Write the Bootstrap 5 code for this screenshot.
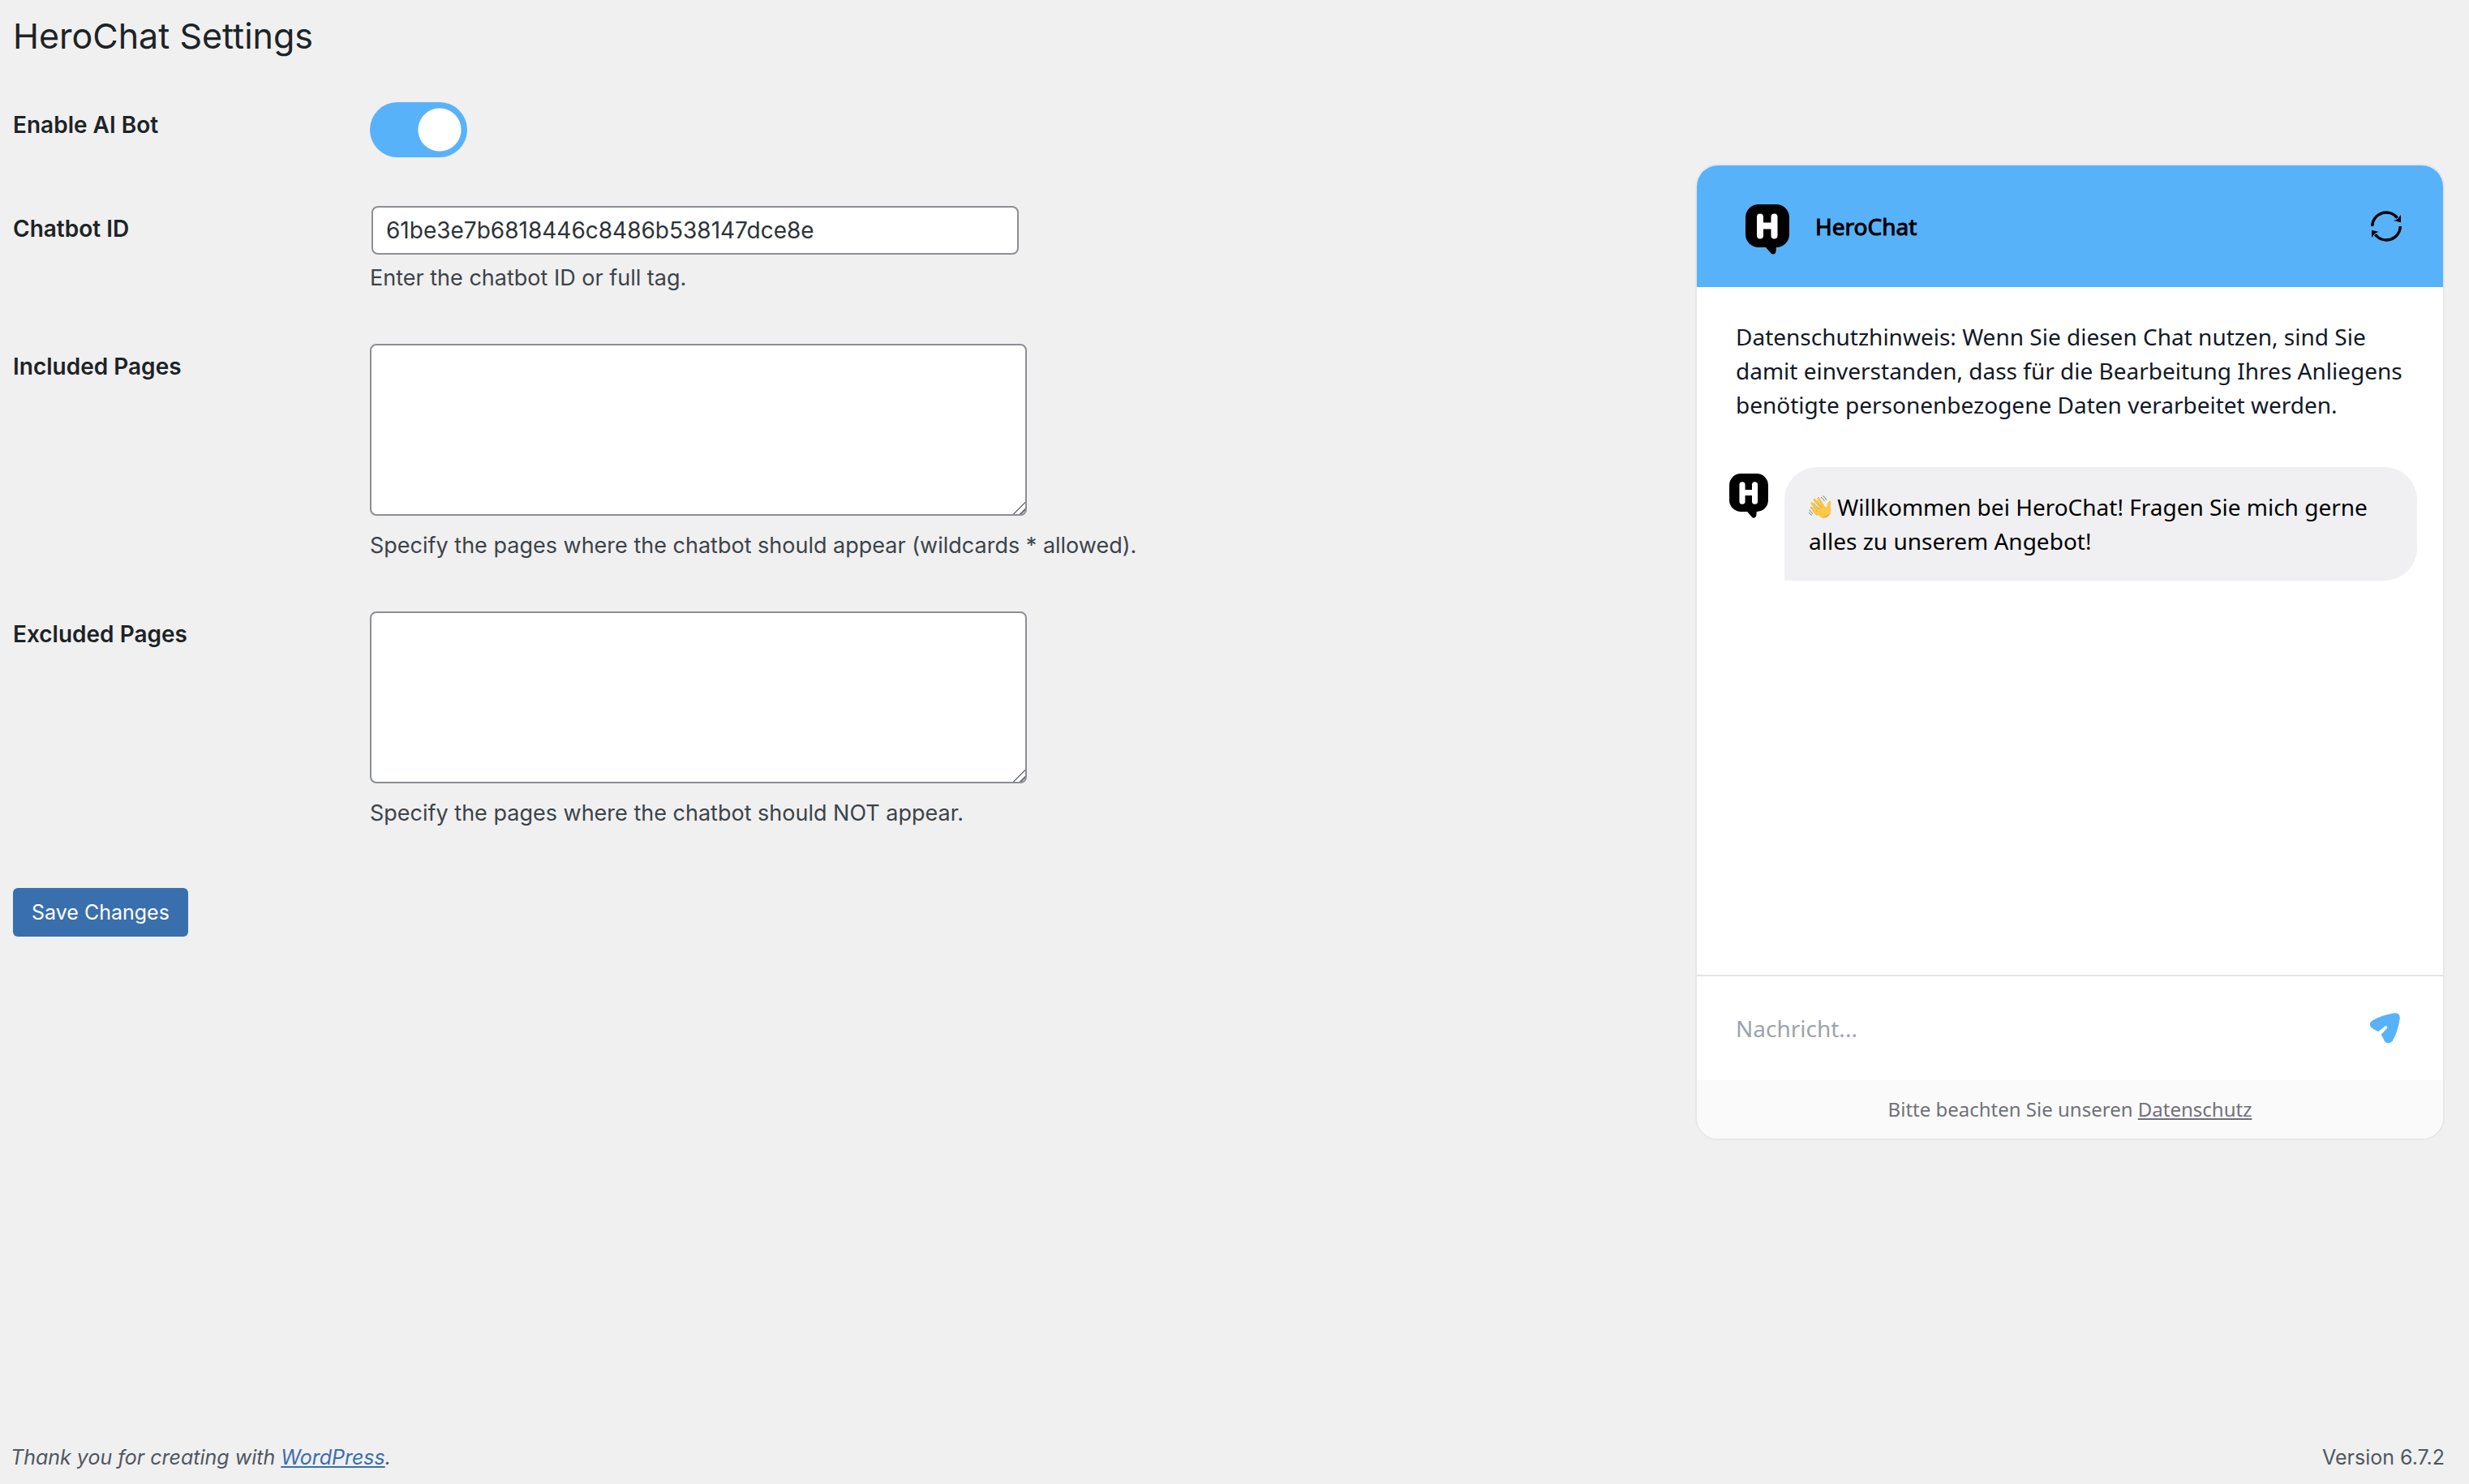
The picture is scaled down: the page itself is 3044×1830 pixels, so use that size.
<!DOCTYPE html>
<html lang="en">
<head>
<meta charset="utf-8">
<meta name="viewport" content="width=device-width, initial-scale=1">
<title>HeroChat Settings</title>
<link href="https://cdn.jsdelivr.net/npm/bootstrap@5.3.0/dist/css/bootstrap.min.css" rel="stylesheet">
<style>
  body { background: #f0f0f0; color: #3c434a; font-family: Inter, "Liberation Sans", sans-serif; font-size: 28px; line-height: 42px; }
  .page-title { font-size: 43px; line-height: 60px; font-weight: 400; color: #1d2327; padding: 14px 0 0; margin: 0 0 52px; }
  .settings { padding-left: 16px; }
  .field { display: flex; margin-bottom: 60px; }
  .field-name { flex: 0 0 440px; color: #1d2327; font-weight: 600; padding-top: 7px; }
  .hint { margin: 8px 0 0; font-size: 27px; }
  .text-area + .hint { margin-top: 16px; }
  .form-check-input.bot-switch { width: 120px; height: 68px; margin: 0; border: 0; border-radius: 34px; background-color: #ddd; background-image: radial-gradient(circle 26px at 34px 34px, #fff 25px, transparent 26px); background-size: 100% 100%; }
  .form-check-input.bot-switch:checked { background-color: #58b2fa; background-image: radial-gradient(circle 27px at 86px 34px, #fff 26px, transparent 27px); }
  .form-control.wp-box { border: 2px solid #8c8f94; border-radius: 8px; background: #fff; color: #2c3338; font-size: 28px; line-height: 42px; padding: 7px 16px; }
  .text-line { width: 798px; height: 60px; margin-left: 2px; }
  .text-area { width: 810px; height: 212px; min-height: 0; }
  .text-area::-webkit-resizer { background: linear-gradient(135deg, transparent 0 48%, #777 48% 56%, transparent 56% 76%, #777 76% 84%, transparent 84%); }
  .save { background: #3a6fad; color: #fff; border: 0; border-radius: 6px; font-size: 25px; line-height: 40px; padding: 10px 23px; margin-top: 11px; }
  .chat { width: 924px; margin: 202px 30px 0 0; border: 2px solid #e5e7eb; border-radius: 28px; background: #fff; overflow: hidden; font-family: "Noto Sans", sans-serif; }
  .chat-head { background: #58b2fa; height: 150px; padding: 0 50px 0 60px; color: #000; }
  .chat-name { font-size: 28px; margin-left: 32px; -webkit-text-stroke: 1px #000; }
  .chat-log { height: 848px; padding: 40px 32px 0 40px; }
  .notice { color: #111827; padding: 0 8px; margin-bottom: 56px; }
  .talk { gap: 20px; }
  .bubble { background: #f0f0f3; color: #000; border-radius: 40px 40px 40px 0; padding: 28px 30px; flex: 1; }
  .wave { width: 28px; height: 28px; vertical-align: -3px; }
  .compose { border-top: 2px solid #e4e4e7; height: 130px; padding: 0 52px 0 48px; }
  .compose input { border: 0; outline: 0; background: none; padding: 0; color: #111827; font-size: 28px; }
  .compose input::placeholder { color: #9ca3af; opacity: 1; }
  .icon-btn { border: 0; background: none; padding: 0; display: flex; }
  .chat-foot { background: #fafafa; color: #71717a; font-size: 24px; line-height: 36px; padding: 18px 0; }
  .page-foot { font-size: 25px; line-height: 40px; color: #50575e; padding: 0 30px 13px 13px; }
  .page-foot a { color: #3a6fad; }
</style>
<script src="https://cdn.jsdelivr.net/npm/bootstrap@5.3.0/dist/js/bootstrap.bundle.min.js"></script>
</head>
<body class="min-vh-100 d-flex flex-column">
<svg class="d-none" xmlns="http://www.w3.org/2000/svg">
  <symbol id="hero" viewBox="0 0 54 62">
    <path d="M16 0h22a16 16 0 0 1 16 16v20a16 16 0 0 1-16 17l-.5 5a3.500 3.500 0 0 1-6 2.500L25 53h-9A16 16 0 0 1 0 37V16A16 16 0 0 1 16 0z" fill="#000"/>
    <path d="M18 15.500v23M35.500 15.500v23M18 26.500h17.500" fill="none" stroke="#fff" stroke-width="8" stroke-linecap="round"/>
  </symbol>
</svg>
<main class="d-flex justify-content-between align-items-start flex-grow-1">
  <form class="settings">
    <h1 class="page-title">HeroChat Settings</h1>
    <div class="field">
      <label class="field-name" for="bot">Enable AI Bot</label>
      <input class="form-check-input bot-switch" type="checkbox" role="switch" id="bot" checked>
    </div>
    <div class="field">
      <label class="field-name" for="cid">Chatbot ID</label>
      <div>
        <input class="form-control wp-box text-line" type="text" id="cid" value="61be3e7b6818446c8486b538147dce8e">
        <p class="hint">Enter the chatbot ID or full tag.</p>
      </div>
    </div>
    <div class="field">
      <label class="field-name" for="inc">Included Pages</label>
      <div>
        <textarea class="form-control wp-box text-area" id="inc"></textarea>
        <p class="hint">Specify the pages where the chatbot should appear (wildcards * allowed).</p>
      </div>
    </div>
    <div class="field">
      <label class="field-name" for="exc">Excluded Pages</label>
      <div>
        <textarea class="form-control wp-box text-area" id="exc"></textarea>
        <p class="hint">Specify the pages where the chatbot should NOT appear.</p>
      </div>
    </div>
    <button type="submit" class="btn save">Save Changes</button>
  </form>
  <section class="chat flex-shrink-0">
    <header class="chat-head d-flex align-items-center">
      <svg class="mt-2" width="54" height="62"><use href="#hero"/></svg>
      <span class="chat-name">HeroChat</span>
      <button type="button" class="icon-btn ms-auto" aria-label="Reload">
        <svg width="40" height="40" viewBox="30 27 120 120">
          <path d="M38 87A52 52 0 0 1 131 56M142 87A52 52 0 0 1 49 118" fill="none" stroke="#000" stroke-width="10"/>
          <path d="M144 45v28l-27-7q10-2 15-6zM36 129v-28l27 7q-10 2-15 6z"/>
        </svg>
      </button>
    </header>
    <div class="chat-log">
      <p class="notice">Datenschutzhinweis: Wenn Sie diesen Chat nutzen, sind Sie damit einverstanden, dass für die Bearbeitung Ihres Anliegens benötigte personenbezogene Daten verarbeitet werden.</p>
      <div class="talk d-flex align-items-start">
        <svg class="mt-2" width="48" height="55"><use href="#hero"/></svg>
        <div class="bubble"><svg class="wave" viewBox="0 0 84 84" role="img" aria-label="Waving hand">
            <path d="M30 70L10 45M40 60L12 29M48 50L21 16M57 45L36 11" fill="none" stroke="#f6c443" stroke-width="9" stroke-linecap="round"/>
            <path d="M24 58L42 34 56 38 66 44C68 34 69 24 76 21 83 20 84 26 81 33 79 42 84 52 80 64 75 79 59 86 46 81 39 79 32 70 24 58z" fill="#fbc947"/>
            <path d="M46 81c16 5 31-3 34-17-8 10-21 15-34 17z" fill="#eda53a"/>
            <path d="M17 42l15 18M19 27l19 24M30 17l18 27" fill="none" stroke="#d98f2b" stroke-width="2"/>
            <path d="M46 7q9 5 12 13M53 2q9 5 12 14M3 54q3 8 11 13M1 63q3 7 10 10" fill="none" stroke="#777b80" stroke-width="3" stroke-linecap="round"/>
          </svg> Willkommen bei HeroChat! Fragen Sie mich gerne alles zu unserem Angebot!</div>
      </div>
    </div>
    <div class="compose d-flex align-items-center">
      <input class="flex-grow-1" type="text" placeholder="Nachricht..." aria-label="Nachricht">
      <button type="button" class="icon-btn" aria-label="Senden">
        <svg width="40" height="40" viewBox="30 36 120 120"><path d="M47 66Q83 47 125 40 148 38 146 60 141 104 119 143 103 159 89 143 84 130 77 119L99 96Q102 86 92 88L67 108Q55 105 41 94 27 78 47 66z" fill="#58b2fa"/></svg>
      </button>
    </div>
    <div class="chat-foot text-center">Bitte beachten Sie unseren <a href="#" class="text-reset">Datenschutz</a></div>
  </section>
</main>
<footer class="page-foot d-flex justify-content-between">
  <em>Thank you for creating with <a href="#">WordPress</a>.</em>
  <span>Version 6.7.2</span>
</footer>
</body>
</html>
